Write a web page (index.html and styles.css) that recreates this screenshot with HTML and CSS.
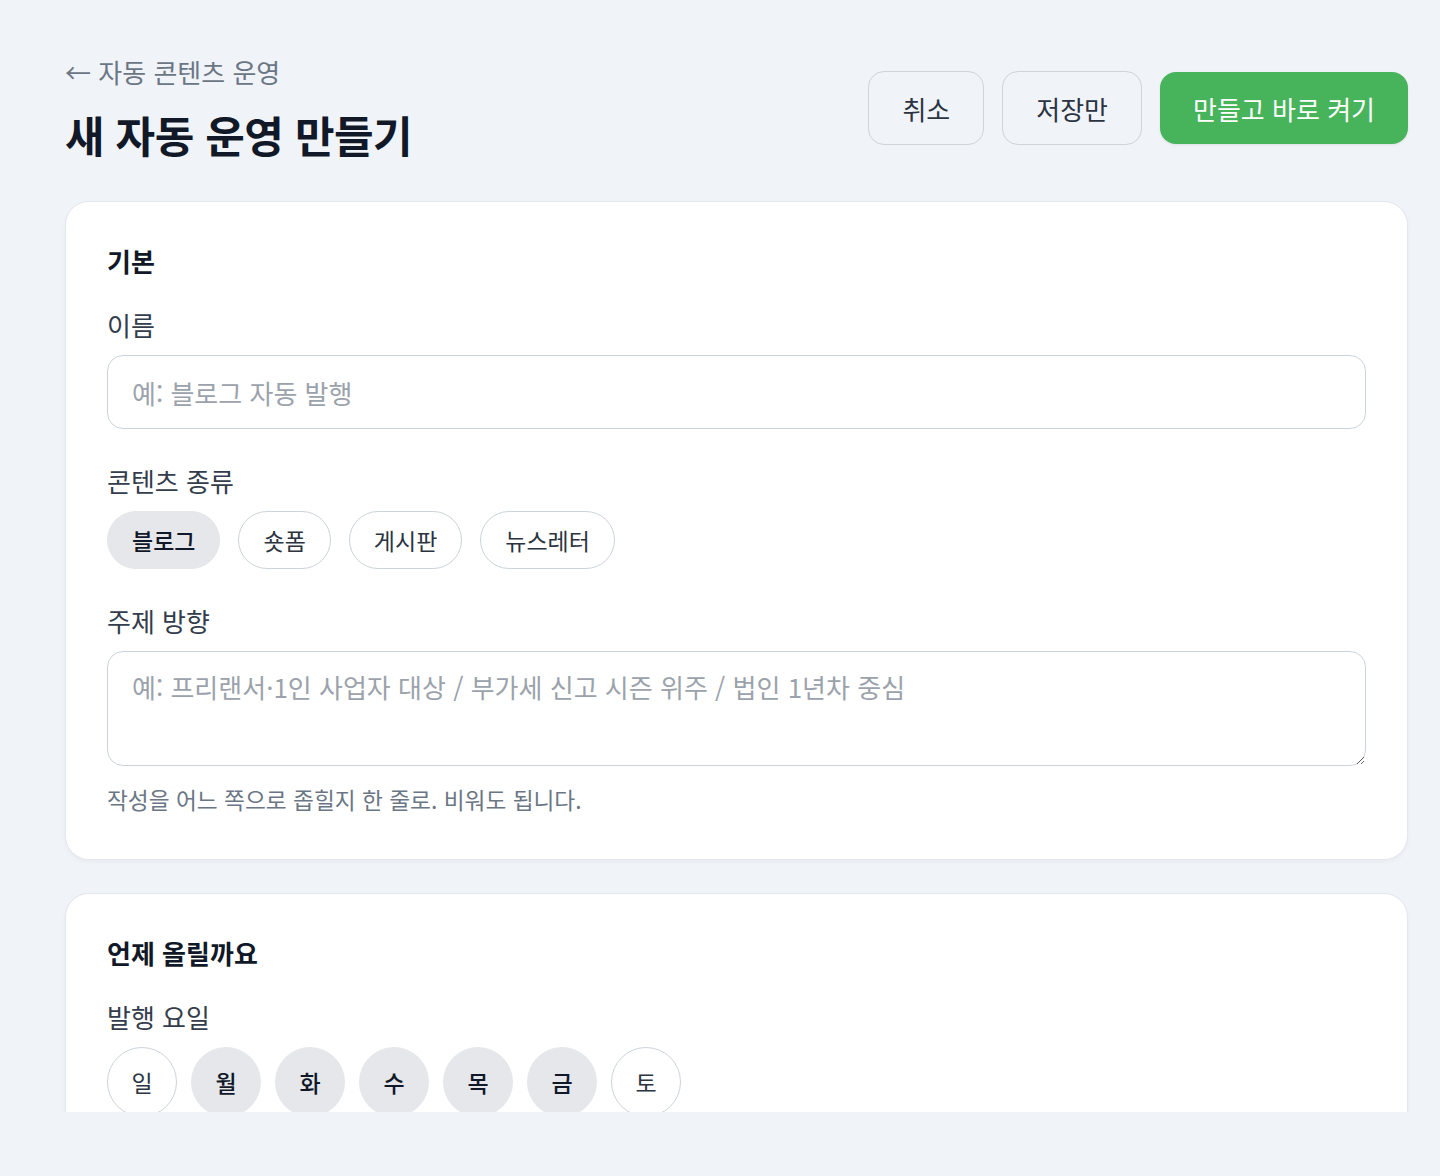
FILE: index.html
```html
<!DOCTYPE html>
<html lang="ko">
<head>
<meta charset="utf-8">
<title>새 자동 운영 만들기</title>
<link rel="stylesheet" href="styles.css">
</head>
<body>
<div class="page">
  <header class="header">
    <div class="titles">
      <a class="back" href="#">← 자동 콘텐츠 운영</a>
      <h1 class="title">새 자동 운영 만들기</h1>
    </div>
    <div class="actions">
      <button class="btn btn-outline">취소</button>
      <button class="btn btn-outline">저장만</button>
      <button class="btn btn-primary">만들고 바로 켜기</button>
    </div>
  </header>

  <section class="card">
    <h2 class="card-title">기본</h2>
    <div class="field">
      <label class="label">이름</label>
      <input class="input" type="text" placeholder="예: 블로그 자동 발행">
    </div>
    <div class="field">
      <label class="label">콘텐츠 종류</label>
      <div class="chips">
        <button class="chip chip-on">블로그</button>
        <button class="chip">숏폼</button>
        <button class="chip">게시판</button>
        <button class="chip">뉴스레터</button>
      </div>
    </div>
    <div class="field">
      <label class="label">주제 방향</label>
      <textarea class="textarea" placeholder="예: 프리랜서·1인 사업자 대상 / 부가세 신고 시즌 위주 / 법인 1년차 중심"></textarea>
      <p class="help">작성을 어느 쪽으로 좁힐지 한 줄로. 비워도 됩니다.</p>
    </div>
  </section>

  <section class="card">
    <h2 class="card-title">언제 올릴까요</h2>
    <div class="field">
      <label class="label">발행 요일</label>
      <div class="days">
        <button class="day">일</button>
        <button class="day day-on">월</button>
        <button class="day day-on">화</button>
        <button class="day day-on">수</button>
        <button class="day day-on">목</button>
        <button class="day day-on">금</button>
        <button class="day">토</button>
      </div>
    </div>
  </section>
</div>
</body>
</html>
```

FILE: styles.css
```css
* { box-sizing: border-box; }

html, body {
  margin: 0;
  background: #f0f3f8;
  font-family: "Noto Sans CJK KR", "Noto Sans", sans-serif;
  color: #1f2937;
}

.page {
  height: 1112px;
  overflow: hidden;
  padding: 55px 32px 0 65px;
}

.header {
  display: flex;
  align-items: center;
  justify-content: space-between;
  margin-bottom: 40px;
}

.titles {
  display: flex;
  flex-direction: column;
}

.back {
  font-size: 26px;
  line-height: 34px;
  color: #6b7684;
  text-decoration: none;
}

.title {
  margin: 18px 0 0;
  font-size: 43px;
  line-height: 54px;
  font-weight: 700;
  color: #111827;
  letter-spacing: -0.5px;
}

.actions {
  display: flex;
  gap: 18px;
  align-items: center;
}

.btn {
  font-family: inherit;
  font-size: 26px;
  height: 74px;
  border-radius: 16px;
  cursor: pointer;
}

.btn-outline {
  background: transparent;
  border: 1.5px solid #cdd4dc;
  color: #2b3440;
  padding: 0 33px;
}

.btn-primary {
  background: #47b35b;
  border: none;
  color: #ffffff;
  height: 72px;
  padding: 0 33px;
  box-shadow: 0 1px 3px rgba(0, 0, 0, 0.08);
}

.card {
  background: #ffffff;
  border: 1.5px solid #e3e8ee;
  border-radius: 24px;
  box-shadow: 0 2px 4px rgba(15, 23, 42, 0.04);
  padding: 42px 41px 44px;
  margin-bottom: 33px;
}

.card-title {
  margin: 0 0 30px;
  font-size: 26px;
  line-height: 34px;
  font-weight: 600;
  color: #111827;
}

.field {
  display: flex;
  flex-direction: column;
  margin-bottom: 35px;
}

.field:last-child {
  margin-bottom: 0;
}

.label {
  font-size: 26px;
  line-height: 34px;
  color: #333d4b;
  margin-bottom: 13px;
}

.input,
.textarea {
  width: 100%;
  font-family: inherit;
  font-size: 26px;
  color: #1f2937;
  border: 1.5px solid #cdd3da;
  border-radius: 16px;
  background: #ffffff;
  padding: 0 24px;
  outline: none;
}

.input {
  height: 74px;
}

.textarea {
  display: block;
  height: 115px;
  padding: 17px 24px;
  line-height: 36px;
  resize: vertical;
}

.input::placeholder,
.textarea::placeholder {
  color: #9ba2ab;
}

.help {
  margin: 19px 0 0;
  font-size: 22.7px;
  line-height: 30px;
  color: #6b7684;
}

.chips {
  display: flex;
  gap: 18px;
}

.chip {
  font-family: inherit;
  font-size: 23px;
  height: 58px;
  padding: 0 24px;
  border-radius: 999px;
  border: 1.5px solid #cdd3da;
  background: #ffffff;
  color: #2b3440;
  cursor: pointer;
}

.chip-on {
  background: #e5e7ea;
  border-color: #e5e7ea;
  color: #111827;
  font-weight: 500;
}

.days {
  display: flex;
  gap: 14px;
}

.day {
  font-family: inherit;
  font-size: 23px;
  width: 70px;
  height: 70px;
  border-radius: 50%;
  border: 1.5px solid #cdd3da;
  background: #ffffff;
  color: #2b3440;
  padding: 0;
  cursor: pointer;
}

.day-on {
  background: #e5e7ea;
  border-color: #e5e7ea;
  color: #111827;
  font-weight: 500;
}
```
